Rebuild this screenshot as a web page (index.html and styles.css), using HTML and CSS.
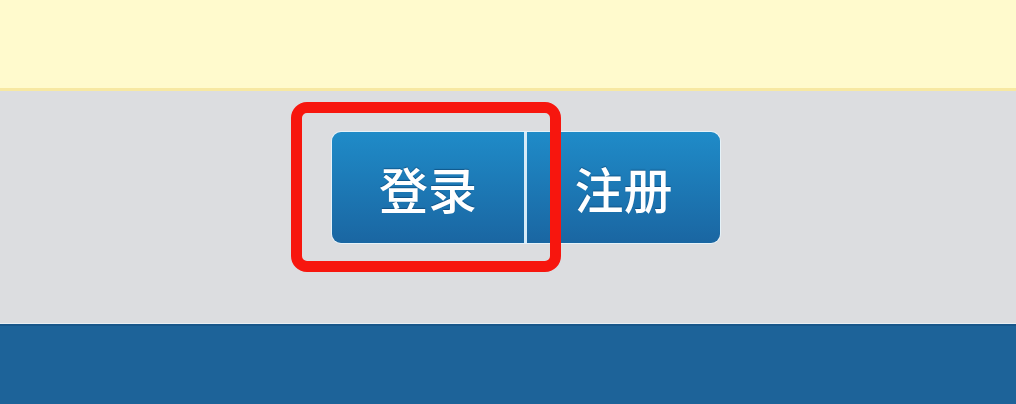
FILE: index.html
```html
<!DOCTYPE html>
<html lang="zh-CN">
<head>
<meta charset="utf-8">
<title>登录 注册</title>
<link rel="stylesheet" href="styles.css">
</head>
<body>
<div class="notice"></div>
<div class="main">
  <div class="btn-group">
    <a class="btn btn-login">登录</a>
    <a class="btn btn-register">注册</a>
  </div>
  <div class="highlight"></div>
</div>
<div class="footer"></div>
</body>
</html>
```
FILE: styles.css
```css
html, body {
  margin: 0;
  padding: 0;
  width: 1016px;
  height: 404px;
  overflow: hidden;
  font-family: "Noto Sans CJK SC", "Noto Sans", sans-serif;
}
.notice {
  height: 88px;
  background: #fffacd;
  border-bottom: 3px solid #f7e8a2;
}
.main {
  position: relative;
  height: 232px;
  background: #dcdde0;
  box-sizing: border-box;
  padding: 41px 0 0 332px;
}
.btn-group {
  display: flex;
  width: 388px;
  height: 111px;
  border-radius: 9px;
  box-shadow: 0 0 0 1px rgba(230, 244, 252, 0.9);
}
.btn {
  display: flex;
  align-items: center;
  justify-content: center;
  height: 111px;
  color: #ffffff;
  font-size: 49px;
  font-weight: 500;
  text-shadow: 0 -1px 1px rgba(0, 40, 80, 0.45);
  background: linear-gradient(#1f8bc8, #1a66a2);
  box-sizing: border-box;
}
.btn-login {
  width: 195px;
  border-right: 3px solid #d6ebf8;
  border-radius: 9px 0 0 9px;
}
.btn-register {
  width: 193px;
  border-radius: 0 9px 9px 0;
}
.highlight {
  position: absolute;
  left: 291px;
  top: 11px;
  width: 270px;
  height: 170px;
  box-sizing: border-box;
  border: 11px solid #f7160e;
  border-radius: 16px;
}
.footer {
  height: 84px;
  background: #1d6399;
  border-top: 1px solid #e8eef3;
  box-shadow: inset 0 2px 0 #17568a;
}
```
